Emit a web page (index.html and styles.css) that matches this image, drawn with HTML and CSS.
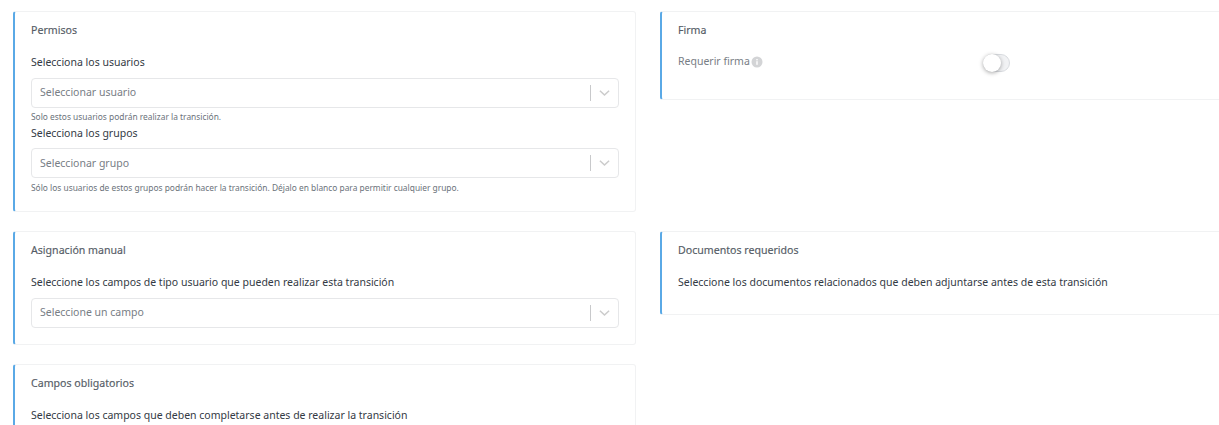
FILE: index.html
```html
<!DOCTYPE html>
<html lang="es">
<head>
<meta charset="utf-8">
<title>Transición</title>
<link rel="stylesheet" href="styles.css">
</head>
<body>
<main class="page">
  <div class="column">
    <section class="card card-permisos">
      <h2 class="card-title">Permisos</h2>
      <div class="label">Selecciona los usuarios</div>
      <div class="select">
        <span class="placeholder">Seleccionar usuario</span>
        <span class="divider"></span>
        <svg class="chevron" viewBox="0 0 12 8"><path d="M1 1.500 6 6.200l5-4.700" /></svg>
      </div>
      <div class="help">Solo estos usuarios podrán realizar la transición.</div>
      <div class="label label-tight">Selecciona los grupos</div>
      <div class="select">
        <span class="placeholder placeholder-low">Seleccionar grupo</span>
        <span class="divider"></span>
        <svg class="chevron" viewBox="0 0 12 8"><path d="M1 1.500 6 6.200l5-4.700" /></svg>
      </div>
      <div class="help help-low">Sólo los usuarios de estos grupos podrán hacer la transición. Déjalo en blanco para permitir cualquier grupo.</div>
    </section>
    <section class="card card-manual">
      <h2 class="card-title">Asignación manual</h2>
      <div class="label">Seleccione los campos de tipo usuario que pueden realizar esta transición</div>
      <div class="select">
        <span class="placeholder">Seleccione un campo</span>
        <span class="divider"></span>
        <svg class="chevron" viewBox="0 0 12 8"><path d="M1 1.500 6 6.200l5-4.700" /></svg>
      </div>
    </section>
    <section class="card card-campos">
      <h2 class="card-title">Campos obligatorios</h2>
      <div class="label">Selecciona los campos que deben completarse antes de realizar la transición</div>
    </section>
  </div>
  <div class="column">
    <div class="slot-top">
      <section class="card card-firma">
        <h2 class="card-title card-title-firma">Firma</h2>
        <div class="sign-row">
          <div class="sign-label">
            <span>Requerir firma</span>
            <svg class="info" viewBox="0 0 12 12"><circle cx="6" cy="6" r="5.500" /><rect x="5.300" y="5.200" width="1.400" height="3.600" /><rect x="5.300" y="3" width="1.400" height="1.400" /></svg>
          </div>
          <span class="toggle"><span class="knob"></span></span>
        </div>
      </section>
    </div>
    <section class="card card-docs">
      <h2 class="card-title">Documentos requeridos</h2>
      <div class="label">Seleccione los documentos relacionados que deben adjuntarse antes de esta transición</div>
    </section>
  </div>
</main>
</body>
</html>
```
FILE: styles.css
```css
html, body {
  margin: 0;
  height: 425px;
  overflow: hidden;
  background: #fff;
}
body {
  font-family: "Noto Sans", "Open Sans", sans-serif;
  font-size: 10.500px;
  color: #333a44;
}
.page {
  display: grid;
  grid-template-columns: 623px 623px;
  column-gap: 24px;
  padding: 11px 0 0 13px;
}
.column {
  display: flex;
  flex-direction: column;
  gap: 19px;
}
.slot-top {
  height: 201px;
}
.card {
  box-sizing: border-box;
  border: 1px solid #f1f2f3;
  border-left: 2px solid #5aa9e6;
  border-radius: 3px;
  padding: 11px 16px 0 16px;
  background: #fff;
}
.card-permisos { height: 201px; }
.card-manual { height: 114px; }
.card-campos { height: 90px; }
.card-firma { height: 89px; }
.card-docs { height: 84px; }
.card-title {
  margin: 0 0 17px;
  font-size: 10.600px;
  line-height: 15px;
  font-weight: 400;
  -webkit-text-stroke: 0.15px #555c66;
  color: #555c66;
}
.card-title-firma {
  margin-bottom: 16px;
}
.label {
  font-size: 10.500px;
  line-height: 15px;
  color: #333a44;
  margin-bottom: 8px;
}
.label-tight {
  margin-bottom: 7px;
}
.select {
  box-sizing: border-box;
  height: 30px;
  display: flex;
  align-items: center;
  border: 1px solid #e6e7e9;
  border-radius: 4px;
  padding: 0 8px 0 8px;
}
.placeholder {
  flex: 1;
  color: #777d85;
  font-size: 10.500px;
  line-height: 26px;
  align-self: flex-start;
}
.placeholder-low {
  line-height: 28px;
}
.divider {
  width: 1px;
  height: 16px;
  background: #c8c9cb;
  margin-right: 8px;
}
.chevron {
  width: 11px;
  height: 8px;
  fill: none;
  stroke: #cccccc;
  stroke-width: 1.700;
}
.help {
  font-size: 8.400px;
  line-height: 12px;
  color: #6b727a;
  margin-top: 3px;
  margin-bottom: 3px;
}
.help-low {
  margin-top: 4px;
}
.sign-row {
  display: grid;
  grid-template-columns: 305px auto;
  align-items: start;
  height: 18px;
}
.sign-label {
  display: flex;
  align-items: center;
  gap: 1px;
  color: #777d85;
  line-height: 15px;
}
.info {
  width: 12px;
  height: 12px;
}
.info circle { fill: #d3d4d6; }
.info rect { fill: #fff; }
.toggle {
  display: block;
  position: relative;
  width: 27px;
  height: 18px;
  border: 1px solid #d9dce0;
  box-sizing: border-box;
  border-radius: 9px;
  background: #f1f2f4;
}
.knob {
  position: absolute;
  left: -1px;
  top: -1px;
  width: 18px;
  height: 18px;
  border-radius: 50%;
  background: #fff;
  box-shadow: 0 1px 4px rgba(0, 0, 0, 0.35);
}
```
